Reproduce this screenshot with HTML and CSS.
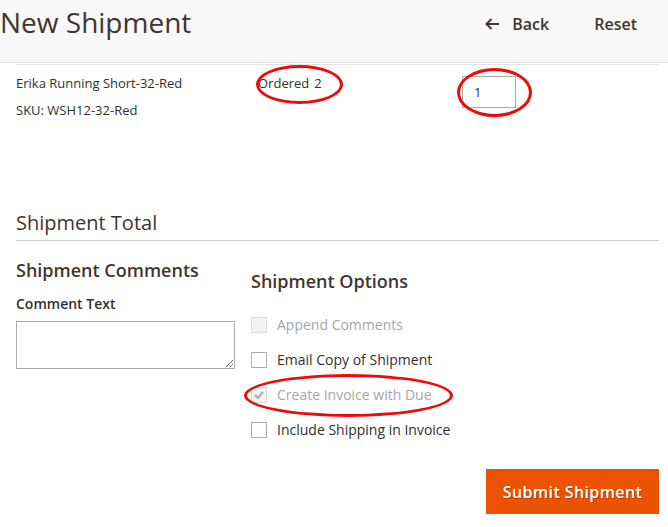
FILE: index.html
```html
<!DOCTYPE html>
<html lang="en">
<head>
<meta charset="utf-8">
<title>New Shipment</title>
<link rel="stylesheet" href="styles.css">
</head>
<body>
<header class="page-header">
  <h1 class="title">New Shipment</h1>
  <div class="actions">
    <button class="action back" type="button">
      <svg class="arrow" width="16" height="14" viewBox="0 0 16 14"><path d="M15 7H2.5M7.5 2L2.5 7L7.5 12" fill="none" stroke="#41362f" stroke-width="2"/></svg>
      <span>Back</span>
    </button>
    <button class="action reset" type="button">Reset</button>
  </div>
</header>

<main class="content">
  <div class="items">
    <div class="item-row">
      <div class="product">
        <div>Erika Running Short-32-Red</div>
        <div>SKU: WSH12-32-Red</div>
      </div>
      <div class="ordered"><span>Ordered</span><span class="ordered-num">2</span></div>
      <div class="qty"><input class="qty-input" type="text" value="1"></div>
    </div>
  </div>

  <h2 class="total-title">Shipment Total</h2>

  <div class="bottom">
    <section class="comments">
      <h3 class="section-title">Shipment Comments</h3>
      <label class="comment-label">Comment Text</label>
      <textarea class="comment-text"></textarea>
    </section>
    <section class="options">
      <h3 class="section-title options-title">Shipment Options</h3>
      <div class="option disabled"><span class="box"></span><span>Append Comments</span></div>
      <div class="option"><span class="box"></span><span>Email Copy of Shipment</span></div>
      <div class="option disabled"><span class="box"><svg width="14" height="14" viewBox="0 0 14 14"><path d="M3 7l3 3 5-6" fill="none" stroke="#a9a9a9" stroke-width="2"/></svg></span><span>Create Invoice with Due</span></div>
      <div class="option"><span class="box"></span><span>Include Shipping in Invoice</span></div>
      <div class="submit-wrap"><button class="submit" type="button">Submit Shipment</button></div>
    </section>
  </div>
</main>

<div class="mark mark-ordered"></div>
<div class="mark mark-qty"></div>
<div class="mark mark-invoice"></div>
</body>
</html>
```

FILE: styles.css
```css
* { box-sizing: border-box; }

body {
  margin: 0;
  font-family: "Open Sans", "Noto Sans", sans-serif;
  color: #303030;
  background: #fff;
  position: relative;
  width: 668px;
  height: 527px;
  overflow: hidden;
}

.page-header {
  height: 63px;
  background: #f8f8f8;
  border-bottom: 1px solid #e3e3e3;
  display: flex;
  justify-content: space-between;
  align-items: flex-start;
}

.title {
  margin: 0;
  padding: 3px 0 0 0;
  font-size: 28px;
  font-weight: 400;
  line-height: 38px;
  color: #41362f;
}

.actions {
  display: flex;
  padding: 13px 31px 0 0;
}

.action {
  border: 0;
  background: none;
  padding: 0;
  font-family: inherit;
  font-size: 16px;
  font-weight: 600;
  line-height: 22px;
  color: #41362f;
  display: flex;
  align-items: center;
}

.back { margin-left: -3px; }
.back .arrow { margin-right: 12px; }
.reset { margin-left: 45px; }

.content {
  padding: 0 9px 0 16px;
}

.items {
  margin-top: 1px;
  border-top: 1px solid #e3e3e3;
}

.item-row {
  display: grid;
  grid-template-columns: 242px 204px 1fr;
  font-size: 13px;
}

.product {
  padding-top: 5px;
  line-height: 27px;
}

.ordered {
  padding-top: 5px;
  line-height: 27px;
}

.ordered-num { margin-left: 5px; }

.qty { padding-top: 11px; }

.qty-input {
  width: 54px;
  height: 32px;
  border: 1px solid #adadad;
  padding: 0 0 0 11px;
  font-family: inherit;
  font-size: 13px;
  color: #303030;
  background: #fff;
}

.total-title {
  margin: 85px 0 0;
  padding-bottom: 4px;
  font-size: 20px;
  font-weight: 400;
  line-height: 27px;
  color: #41362f;
  border-bottom: 1px solid #cccccc;
}

.bottom {
  display: grid;
  grid-template-columns: 228px 1fr;
}

.section-title {
  margin: 17px 0 0;
  font-size: 18px;
  font-weight: 600;
  line-height: 24px;
  color: #41362f;
}

.comments { padding-right: 9px; }

.comment-label {
  display: block;
  margin-top: 12px;
  font-size: 14px;
  font-weight: 600;
  line-height: 19px;
  color: #303030;
}

.comment-text {
  display: block;
  margin-top: 8px;
  width: 219px;
  height: 48px;
  border: 1px solid #adadad;
  resize: both;
}

.options { padding-left: 7px; }

.options-title { margin-top: 28px; margin-bottom: 14px; }

.option {
  height: 35px;
  display: flex;
  align-items: center;
  gap: 10px;
  font-size: 14px;
  color: #303030;
}

.option .box {
  width: 16px;
  height: 16px;
  border: 1px solid #adadad;
  background: #fff;
  display: flex;
  align-items: center;
  justify-content: center;
}

.option.disabled { color: #a6a6a6; }
.option.disabled .box {
  border-color: #dcdcdc;
  background: #f3f3f3;
}

.submit-wrap {
  display: flex;
  justify-content: flex-end;
  margin-top: 22px;
}

.submit {
  height: 45px;
  width: 173px;
  border: 0;
  background: #eb5202;
  color: #fff;
  font-family: inherit;
  font-size: 16px;
  font-weight: 600;
  letter-spacing: 0.4px;
  text-shadow: 1px 1px 0 rgba(0, 0, 0, 0.25);
}

.mark {
  position: absolute;
  border: 3px solid #ee0a0a;
  border-radius: 50%;
  pointer-events: none;
}

.mark-ordered { left: 256px; top: 65px; width: 87px; height: 39px; }
.mark-qty { left: 457px; top: 68px; width: 75px; height: 49px; }
.mark-invoice { left: 244px; top: 374px; width: 209px; height: 43px; }
```
